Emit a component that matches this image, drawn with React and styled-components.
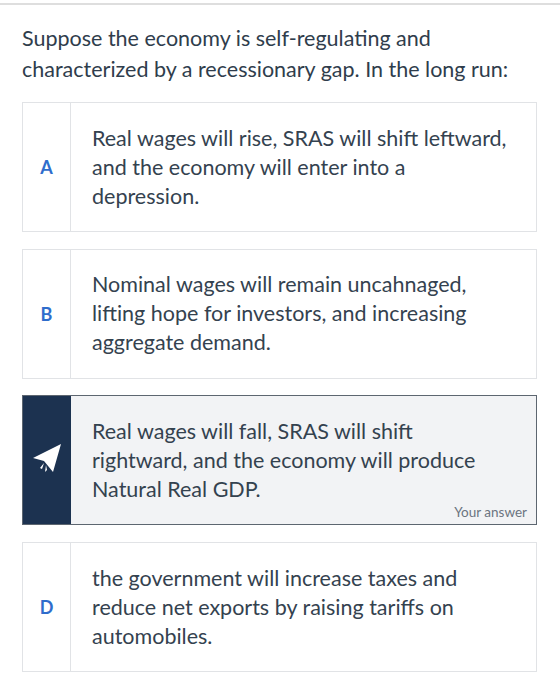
import React from 'react'
import styled, { createGlobalStyle } from 'styled-components'

const GlobalStyle = createGlobalStyle`
    body {
        margin: 0;
        background: #ffffff;
        font-family: "Lato", "Noto Sans", sans-serif;
    }
`

const Page = styled.div`
    width: 560px;
    min-height: 693px;
    border-top: 2px solid #dedede;
    margin-top: 3px;
    box-sizing: border-box;
    padding: 18px 23px 0 22px;
`

const Question = styled.h2`
    margin: 0 0 17px;
    font-size: 21.5px;
    font-weight: 400;
    line-height: 31px;
    color: #2f3d4c;
`

const Options = styled.div`
    display: flex;
    flex-direction: column;
    gap: 16.7px;
`

const Card = styled.div`
    display: flex;
    height: 130px;
    box-sizing: border-box;
    border: 1px solid ${p => (p.$selected ? '#5d6670' : '#e1e3e6')};
    background: ${p => (p.$selected ? '#f2f3f5' : '#ffffff')};
`

const Key = styled.div`
    width: 47px;
    flex-shrink: 0;
    display: flex;
    align-items: center;
    justify-content: center;
    border-right: 1px solid ${p => (p.$selected ? '#1c3250' : '#e1e3e6')};
    background: ${p => (p.$selected ? '#1c3250' : 'transparent')};
    color: #2f6dcc;
    font-weight: 700;
    font-size: 18px;
`

const Body = styled.div`
    flex: 1;
    position: relative;
    display: flex;
    align-items: center;
    padding: 0 12px 0 21px;
`

const Text = styled.p`
    margin: 0;
    font-size: 21.5px;
    line-height: 29px;
    color: #34424f;
    white-space: nowrap;
`

const Tag = styled.span`
    position: absolute;
    right: 9px;
    bottom: 4px;
    font-size: 13.5px;
    color: #6b7480;
`

const PlaneIcon = () => (
    <svg width="32" height="32" viewBox="0 0 32 32" style={{ marginTop: -4 }}>
        <path d="M30 2 L2 16 L13 19 L22 30 Z" fill="#fff" />
        <path d="M13 21 L9 26 L11 27 Z M15 23 L14 30 L16 28 Z" fill="#fff" />
    </svg>
)

const options = [
    { key: 'A', lines: ['Real wages will rise, SRAS will shift leftward,', 'and the economy will enter into a', 'depression.'] },
    { key: 'B', lines: ['Nominal wages will remain uncahnaged,', 'lifting hope for investors, and increasing', 'aggregate demand.'] },
    { key: 'C', lines: ['Real wages will fall, SRAS will shift', 'rightward, and the economy will produce', 'Natural Real GDP.'], selected: true },
    { key: 'D', lines: ['the government will increase taxes and', 'reduce net exports by raising tariffs on', 'automobiles.'] },
]

const App = () => {
    return (
        <Page>
            <GlobalStyle />
            <Question>
                Suppose the economy is self-regulating and<br />
                characterized by a recessionary gap. In the long run:
            </Question>
            <Options>
                {options.map(o => (
                    <Card key={o.key} $selected={o.selected}>
                        <Key $selected={o.selected}>{o.selected ? <PlaneIcon /> : o.key}</Key>
                        <Body>
                            <Text>
                                {o.lines.map((line, i) => (
                                    <React.Fragment key={i}>
                                        {i > 0 && <br />}
                                        {line}
                                    </React.Fragment>
                                ))}
                            </Text>
                            {o.selected && <Tag>Your answer</Tag>}
                        </Body>
                    </Card>
                ))}
            </Options>
        </Page>
    )
}

export default App
